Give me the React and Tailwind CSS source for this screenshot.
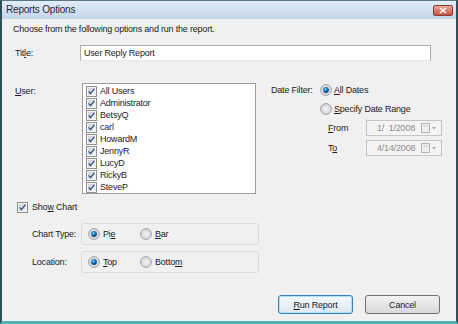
import React from 'react';

const font = "font-['Liberation_Sans',Arial,sans-serif]";

function CheckBox() {
    return (
        <svg width="11" height="11" viewBox="0 0 11 11" className="shrink-0">
            <defs>
                <linearGradient id="cbg" x1="0" y1="0" x2="1" y2="1">
                    <stop offset="0" stopColor="#cbcfd5" />
                    <stop offset="1" stopColor="#f6f6f6" />
                </linearGradient>
            </defs>
            <rect x="0.5" y="0.5" width="10" height="10" fill="#f4f4f4" stroke="#8e8f8f" />
            <rect x="2" y="2" width="7" height="7" fill="url(#cbg)" />
            <path d="M2.6 5.4 L4.5 7.6 L8.4 2.6" fill="none" stroke="#3d5287" strokeWidth="1.4" />
        </svg>
    );
}

function Radio({ checked }) {
    return (
        <svg width="12" height="12" viewBox="0 0 12 12" className="shrink-0">
            <defs>
                <radialGradient id="rbg" cx="0.5" cy="0.5" r="0.5">
                    <stop offset="0" stopColor="#f4f4f4" />
                    <stop offset="1" stopColor="#d2d4d8" />
                </radialGradient>
                <radialGradient id="rdot" cx="0.4" cy="0.35" r="0.6">
                    <stop offset="0" stopColor="#7cd0ff" />
                    <stop offset="0.5" stopColor="#1a7cc9" />
                    <stop offset="1" stopColor="#0a3f6e" />
                </radialGradient>
            </defs>
            <circle cx="6" cy="6" r="5.4" fill="url(#rbg)" stroke="#9a9c9f" strokeWidth="0.9" />
            {checked ? <circle cx="6" cy="6" r="2.9" fill="url(#rdot)" /> : null}
        </svg>
    );
}

function DateBox({ value }) {
    return (
        <div className="flex h-[16px] w-[76px] items-center border border-[#c5c5c5] bg-[#f4f4f4] pl-[10px] pr-[4px]">
            <span className="flex-1 whitespace-pre text-[#8d8d8d]">{value}</span>
            <svg width="16" height="10" viewBox="0 0 16 10" className="shrink-0">
                <rect x="0.5" y="0.5" width="8" height="9" fill="#efefef" stroke="#b4b4b4" />
                <line x1="2" y1="3" x2="7" y2="3" stroke="#c8c8c8" />
                <path d="M11 4 L15 4 L13 6.5 Z" fill="#a8a8a8" />
            </svg>
        </div>
    );
}

const users = ['All Users', 'Administrator', 'BetsyQ', 'carl', 'HowardM', 'JennyR', 'LucyD', 'RickyB', 'SteveP'];

export default function App() {
    return (
        <div className={`${font} flex h-[324px] w-[458px] flex-col overflow-hidden whitespace-nowrap border-x-2 border-t border-b-[3px] border-x-[#2d4f58] border-t-[#5b7785] border-b-[#56aeb8] bg-[#f0f0f0] text-[9px] leading-[12px] tracking-[-0.2px] text-[#1b1b1b]`}>
            <div className="flex h-[18px] shrink-0 items-center bg-gradient-to-b from-[#e3ecf7] to-[#c3d5ea] pl-[4px] pr-[3px]">
                <span className="flex-1 text-[10px] tracking-[-0.2px] text-[#1c2a3a]">Reports Options</span>
                <div className="flex h-[11px] w-[20px] items-center justify-center rounded-[2px] border border-[#8a3a2e] bg-gradient-to-b from-[#e9a99b] to-[#c4503d]">
                    <svg width="8" height="7" viewBox="0 0 8 7">
                        <path d="M1 1 L7 6 M7 1 L1 6" stroke="#ffffff" strokeWidth="1.6" />
                    </svg>
                </div>
            </div>

            <div className="flex flex-1 flex-col pl-[13px] pt-[4px]">
                <p className="-ml-[2px]">Choose from the following options and run the report.</p>

                <div className="mt-[10px] flex items-center">
                    <span className="w-[65px]">Tit<u>l</u>e:</span>
                    <div className="flex h-[16px] w-[351px] items-center border border-[#abadb3] border-b-[#e3e9ef] bg-white pl-[3px]">
                        User Reply Report
                    </div>
                </div>

                <div className="mt-[22px] flex">
                    <span className="mt-[2px] w-[67px]"><u>U</u>ser:</span>
                    <div className="h-[111px] w-[174px] border border-[#9a9ea5] bg-white pt-[1px] pl-[3px]">
                        {users.map((name) => (
                            <div key={name} className="flex h-[12px] items-center gap-[3px]">
                                <CheckBox />
                                <span>{name}</span>
                            </div>
                        ))}
                    </div>

                    <div className="ml-[15px] flex flex-col">
                        <div className="flex h-[14px] items-center">
                            <span className="w-[49px]">Date Filter:</span>
                            <Radio checked />
                            <span className="ml-[2px]"><u>A</u>ll Dates</span>
                        </div>
                        <div className="mt-[5px] flex h-[14px] items-center pl-[49px]">
                            <Radio />
                            <span className="ml-[2px]"><u>S</u>pecify Date Range</span>
                        </div>
                        <div className="mt-[4px] flex items-center pl-[57px]">
                            <span className="w-[38px]"><u>F</u>rom</span>
                            <DateBox value="1/  1/2008" />
                        </div>
                        <div className="mt-[4px] flex items-center pl-[57px]">
                            <span className="w-[38px]">T<u>o</u></span>
                            <DateBox value="4/14/2008" />
                        </div>
                    </div>
                </div>

                <div className="mt-[7px] flex items-center gap-[4px] pl-[2px]">
                    <CheckBox />
                    <span>Sho<u>w</u> Chart</span>
                </div>

                <div className="mt-[10px] flex items-center pl-[17px]">
                    <span className="w-[49px]">Chart Type:</span>
                    <div className="flex h-[22px] w-[178px] items-center rounded-[3px] border border-[#d5dde3] pl-[6px]">
                        <div className="flex w-[52px] items-center gap-[3px]">
                            <Radio checked />
                            <span>Pi<u>e</u></span>
                        </div>
                        <div className="flex items-center gap-[3px]">
                            <Radio />
                            <span><u>B</u>ar</span>
                        </div>
                    </div>
                </div>

                <div className="mt-[6px] flex items-center pl-[17px]">
                    <span className="w-[49px]">Location:</span>
                    <div className="flex h-[22px] w-[178px] items-center rounded-[3px] border border-[#d5dde3] pl-[6px]">
                        <div className="flex w-[52px] items-center gap-[3px]">
                            <Radio checked />
                            <span><u>T</u>op</span>
                        </div>
                        <div className="flex items-center gap-[3px]">
                            <Radio />
                            <span>Botto<u>m</u></span>
                        </div>
                    </div>
                </div>

                <div className="mt-[22px] flex justify-end gap-[12px] pr-[16px]">
                    <button className="h-[19px] w-[75px] rounded-[3px] border border-[#3c7fb1] bg-gradient-to-b from-[#f3f9fd] to-[#dfe9f2] shadow-[inset_0_0_0_1px_#aee3f9]">
                        <u>R</u>un Report
                    </button>
                    <button className="h-[19px] w-[75px] rounded-[3px] border border-[#707070] bg-gradient-to-b from-[#f2f2f2] to-[#d9d9d9]">
                        Cancel
                    </button>
                </div>
            </div>
        </div>
    );
}
